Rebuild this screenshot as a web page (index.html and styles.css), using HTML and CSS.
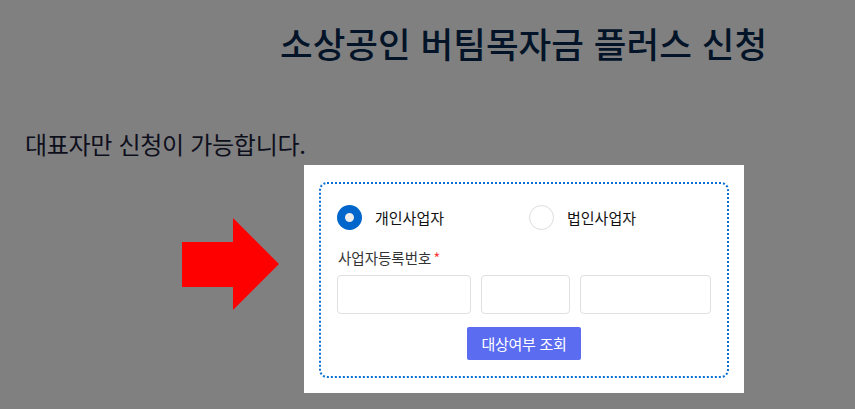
FILE: index.html
```html
<!DOCTYPE html>
<html lang="ko">
<head>
<meta charset="utf-8">
<title>소상공인 버팀목자금 플러스 신청</title>
<link rel="stylesheet" href="styles.css">
</head>
<body>
<h1 class="title">소상공인 버팀목자금 플러스 신청</h1>
<p class="notice">대표자만 신청이 가능합니다.</p>
<div class="stage">
  <svg class="arrow" width="97" height="92" viewBox="0 0 97 92" aria-hidden="true">
    <polygon points="0,24 51,24 51,0 97,46 51,92 51,69 0,69" fill="#ff0000"/>
  </svg>
  <div class="panel">
    <div class="box">
      <div class="radios">
        <label class="radio radio-first"><span class="dot dot-on"></span><span class="radio-text">개인사업자</span></label>
        <label class="radio"><span class="dot"></span><span class="radio-text">법인사업자</span></label>
      </div>
      <div class="field-label">사업자등록번호<span class="req">*</span></div>
      <div class="inputs">
        <span class="input in1"></span>
        <span class="input in2"></span>
        <span class="input in3"></span>
      </div>
      <div class="actions">
        <button class="btn" type="button">대상여부 조회</button>
      </div>
    </div>
  </div>
</div>
</body>
</html>
```
FILE: styles.css
```css
html, body {
  margin: 0;
  padding: 0;
}
body {
  background: #808080;
  font-family: "Noto Sans CJK KR", "Noto Sans", sans-serif;
  width: 855px;
  height: 409px;
  overflow: hidden;
}
.title {
  margin: 0;
  padding: 19px 0 0 280px;
  font-size: 35.5px;
  font-weight: 500;
  line-height: 48px;
  color: #031429;
  letter-spacing: 0;
}
.notice {
  margin: 0;
  padding: 60px 0 0 25px;
  font-size: 24px;
  font-weight: 400;
  line-height: 34px;
  color: #0e0f1c;
  letter-spacing: -0.3px;
}
.stage {
  display: flex;
  align-items: flex-start;
  margin-top: 4px;
  padding-left: 182px;
}
.arrow {
  display: block;
  margin-top: 53px;
  flex: none;
}
.panel {
  margin-left: 25px;
  width: 440px;
  height: 228px;
  box-sizing: border-box;
  background: #ffffff;
  padding: 17px 15px 15px 15px;
}
.box {
  box-sizing: border-box;
  height: 196px;
  border: 2px dotted #0a6fd0;
  border-radius: 8px;
  padding: 20px 16px 0 16px;
}
.radios {
  display: flex;
  align-items: center;
  height: 26px;
}
.radio {
  display: flex;
  align-items: center;
  font-size: 15px;
  color: #111;
}
.radio-first {
  width: 192px;
}
.dot {
  box-sizing: border-box;
  width: 25px;
  height: 25px;
  border-radius: 50%;
  border: 1px solid #dddddd;
  background: #fff;
  margin-right: 13px;
  flex: none;
}
.dot-on {
  border: 8px solid #0066cc;
  background: #eeeeee;
}
.field-label {
  margin-top: 18px;
  font-size: 14.5px;
  line-height: 20px;
  color: #333;
  padding-left: 1px;
}
.req {
  color: #ff3b3b;
  margin-left: 2px;
}
.inputs {
  display: flex;
  gap: 10px;
  margin-top: 7px;
}
.input {
  display: block;
  box-sizing: border-box;
  height: 39px;
  border: 1px solid #e0e0e0;
  border-radius: 4px;
  background: #fff;
}
.in1 { width: 134px; }
.in2 { width: 89px; }
.in3 { width: 131px; }
.actions {
  display: flex;
  justify-content: center;
  margin-top: 13px;
}
.btn {
  width: 114px;
  height: 33px;
  border: 0;
  border-radius: 2px;
  background: #5b6cf0;
  color: #fff;
  font-family: "Noto Sans CJK KR", "Noto Sans", sans-serif;
  font-size: 15px;
  padding: 0;
  letter-spacing: -0.3px;
}
```
